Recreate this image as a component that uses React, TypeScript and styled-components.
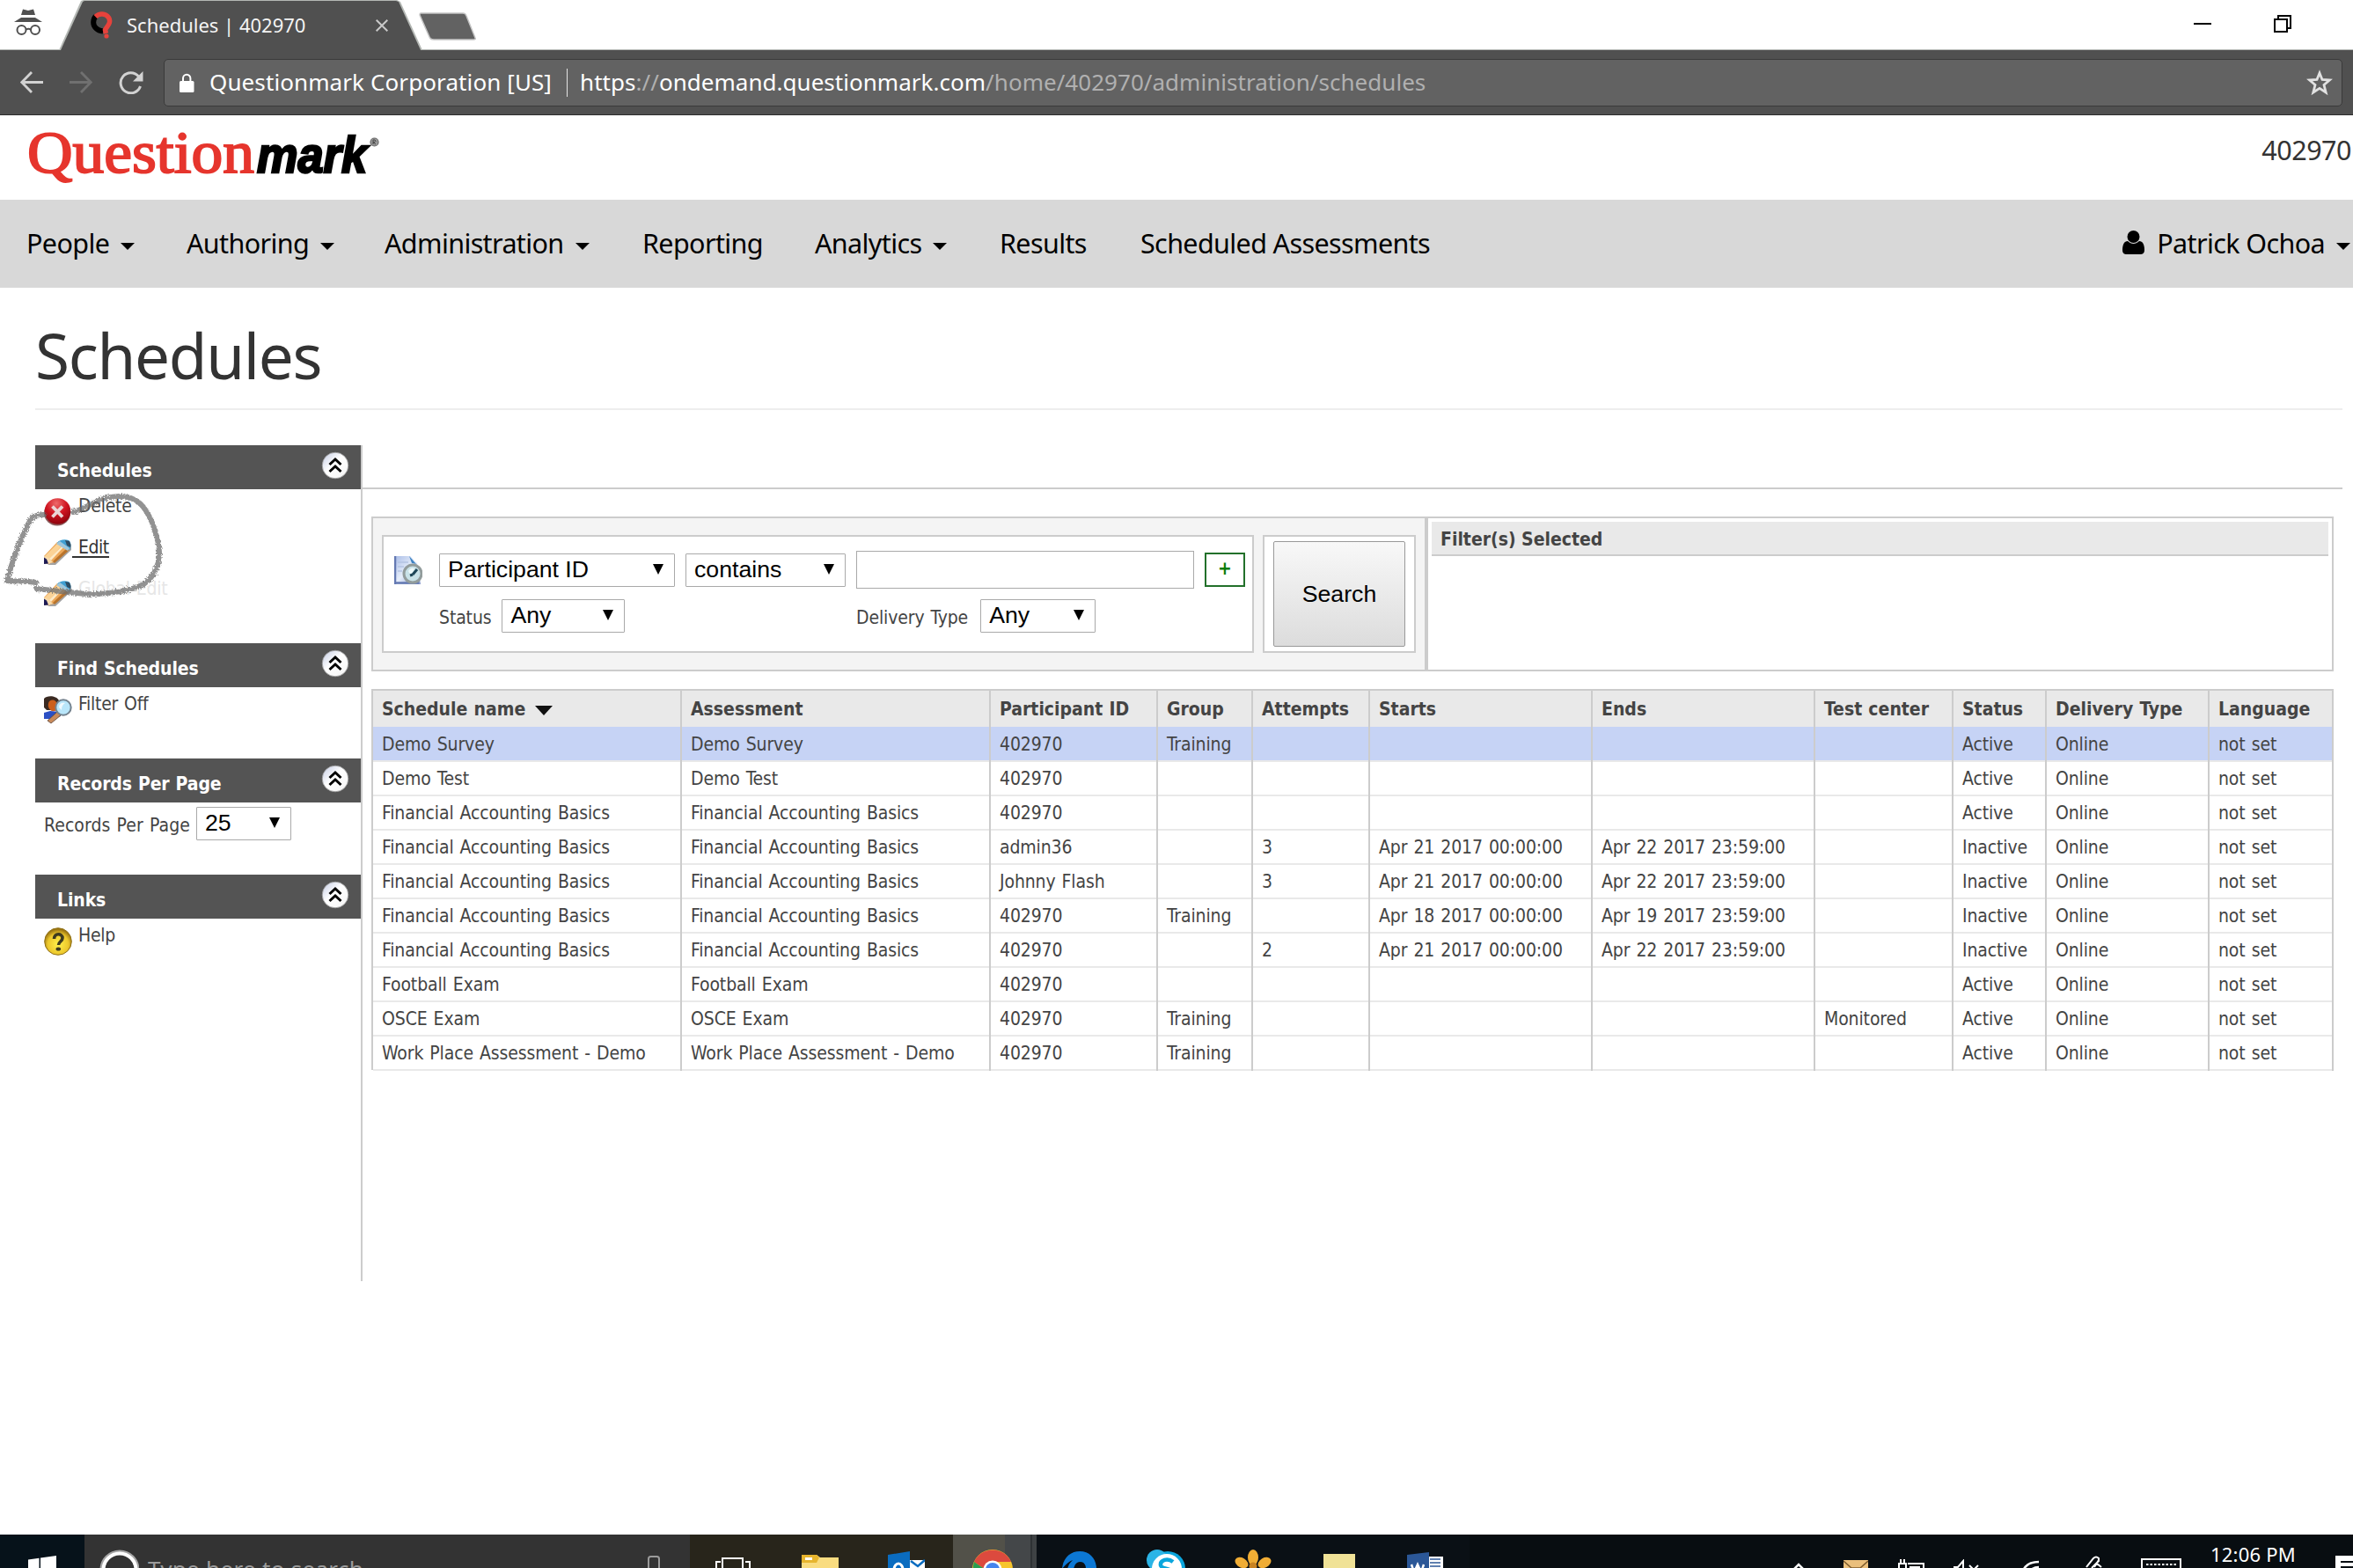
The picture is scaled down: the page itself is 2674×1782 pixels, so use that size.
import React from 'react';
import styled, { createGlobalStyle, css } from 'styled-components';

const ui = '"Noto Sans", "Open Sans", sans-serif';
const tahoma = '"DejaVu Sans Condensed", "DejaVu Sans", sans-serif';
const arial = '"Liberation Sans", Arial, sans-serif';

const Global = createGlobalStyle`
  * { box-sizing: border-box; }
  body { margin: 0; background: #fff; font-family: ${ui}; overflow: hidden; }
  svg { display: block; flex: none; }
`;

const Screen = styled.div`
  width: 2674px;
  height: 1782px;
  display: flex;
  flex-direction: column;
  overflow: hidden;
  background: #fff;
`;

/* ---------- browser chrome ---------- */
const TabStrip = styled.div`
  height: 57px;
  flex: none;
  display: flex;
  background: #fff;
  border-bottom: 1px solid #b4b8b4;
`;
const IncognitoSlot = styled.div`
  width: 67px;
  padding: 9px 0 0 16px;
`;
const Tab = styled.div`
  width: 413px;
  height: 57px;
  flex: none;
  display: flex;
  align-items: center;
  background: #b4b8b4;
  clip-path: polygon(0 100%, 25px 1px, 28px 0, 384px 0, 388px 2px, 100% 100%);
`;
const TabFace = styled.div`
  width: 100%;
  height: 57px;
  display: flex;
  align-items: center;
  padding: 0 39px 0 36px;
  background: #505050;
  clip-path: polygon(2px 100%, 27px 2px, 29px 1px, 383px 1px, 386px 2px, 411px 100%);
`;
const TabTitle = styled.span`
  font-size: 22px;
  line-height: 57px;
  color: #f4f4f4;
  margin-left: 15px;
  flex: 1;
`;
const NewTab = styled.svg`
  margin: 14px 0 0 -5px;
`;
const WindowControls = styled.div`
  margin-left: auto;
  display: flex;
  align-items: flex-start;
  gap: 71px;
  padding: 17px 70px 0 0;
`;
const Toolbar = styled.div`
  height: 74px;
  flex: none;
  display: flex;
  align-items: center;
  background: #505050;
  border-bottom: 1px solid #2c2c2c;
  padding: 0 12px 0 23px;
`;
const NavButtons = styled.div`
  width: 163px;
  display: flex;
  gap: 30px;
`;
const Omnibox = styled.div`
  flex: 1;
  height: 54px;
  display: flex;
  align-items: center;
  background: #626262;
  border: 1px solid #3a3a3a;
  border-radius: 5px;
  padding: 0 10px 0 17px;
  font-size: 26px;
  line-height: 50px;
  color: #fff;
  white-space: pre;
`;
const Site = styled.span`
  margin-left: 17px;
  padding-bottom: 2px;
  letter-spacing: 0.1px;
`;
const Divider = styled.span`
  width: 1px;
  height: 32px;
  background: #e4e4e4;
  margin: 0 14px 0 17px;
`;
const Muted = styled.span`
  color: #b0b0b0;
`;
const Url = styled.span`
  flex: 1;
  padding-bottom: 2px;
  letter-spacing: 0.03px;
`;

/* ---------- site header ---------- */
const Brand = styled.header`
  height: 96px;
  flex: none;
  display: flex;
  justify-content: space-between;
  padding: 0 2px 0 30px;
`;
const Account = styled.span`
  font-size: 30.5px;
  line-height: 78px;
  letter-spacing: -0.5px;
  color: #333;
`;
const Nav = styled.nav`
  height: 100px;
  flex: none;
  display: flex;
  align-items: center;
  background: #d8d8d8;
  padding: 0 3px 2px 30px;
  font-size: 30.5px;
  letter-spacing: -0.62px;
  color: #000;
`;
const NavItem = styled.a<{ $w: number }>`
  width: ${p => p.$w}px;
  flex: none;
  display: flex;
  align-items: center;
  gap: 13px;
  white-space: nowrap;
`;
const Caret = styled.i`
  margin-top: 8px;
  border: 8px solid transparent;
  border-top-color: #000;
  border-bottom: 0;
`;
const User = styled.a`
  margin-left: auto;
  display: flex;
  align-items: center;
  gap: 13px;
  svg { margin-right: 1px; }
`;

/* ---------- page ---------- */
const Page = styled.main`
  flex: 1;
  padding: 26px 12px 0 40px;
`;
const Title = styled.h1`
  margin: 0 0 40px;
  height: 113px;
  border-bottom: 2px solid #eee;
  font-size: 71px;
  font-weight: 400;
  line-height: 101px;
  letter-spacing: -1.3px;
  color: #333;
`;
const Columns = styled.div`
  display: flex;
  font-family: ${tahoma};
  font-size: 21px;
  letter-spacing: -0.12px;
  word-spacing: 1.2px;
  color: #444;
`;
const Sidebar = styled.aside`
  position: relative;
  width: 372px;
  height: 950px;
  flex: none;
  border-right: 2px solid #ccc;
`;
const Section = styled.section<{ $h: number }>`
  height: ${p => p.$h}px;
`;
const SectionHead = styled.header`
  height: 50px;
  display: flex;
  justify-content: space-between;
  background: #545454;
  color: #fff;
  font-weight: 700;
  letter-spacing: -0.1px;
  word-spacing: 0.5px;
  line-height: 58px;
  padding: 0 13px 0 25px;
  svg { margin-top: 7px; }
`;
const Links = styled.div`
  padding: 10px 0 0 10px;
`;
const SideLink = styled.a<{ $active?: boolean; $faded?: boolean }>`
  height: 47px;
  display: flex;
  line-height: 19px;
  letter-spacing: -0.25px;
  color: ${p => (p.$faded ? '#e6e6e6' : '#444')};
  span {
    white-space: pre;
    height: 21px;
    margin-left: ${p => (p.$active ? 0 : 7)}px;
    padding-left: ${p => (p.$active ? 7 : 0)}px;
    ${p => p.$active && css`color: #333; border-bottom: 2px solid #333; letter-spacing: -0.5px;`}
  }
`;
const PerPage = styled.label`
  display: flex;
  align-items: center;
  gap: 7px;
  padding: 5px 0 0 10px;
  letter-spacing: 0.05px;
`;
const Label = styled.span`
  padding-top: 4px;
`;
const SelectBox = styled.span<{ $w: number }>`
  width: ${p => p.$w}px;
  height: 38px;
  display: flex;
  justify-content: space-between;
  align-items: center;
  flex: none;
  border: 1px solid #a9a9a9;
  border-radius: 1px;
  background: #fff;
  color: #000;
  font-family: ${arial};
  font-size: 26.67px;
  letter-spacing: 0;
  word-spacing: 0;
  line-height: 34px;
  padding: 0 12px 2px 9px;
  &::after {
    content: '';
    border: 6px solid transparent;
    border-top: 12px solid #000;
    border-bottom: 0;
  }
`;
const Scribble = styled.svg`
  position: absolute;
  left: -39px;
  top: 36px;
  pointer-events: none;
`;

const Content = styled.div`
  flex: 1;
  padding-left: 10px;
`;
const Rule = styled.div`
  height: 50px;
  margin-left: -10px;
  border-bottom: 2px solid #ccc;
`;
const FilterBar = styled.div`
  width: 2230px;
  height: 176px;
  margin: 31px 0 20px;
  display: flex;
  border: 2px solid #ccc;
  background: #f4f4f4;
`;
const Criteria = styled.div`
  width: 991px;
  height: 134px;
  margin: 19px 10px 0 10px;
  flex: none;
  border: 2px solid #ccc;
  background: #fff;
  padding: 16px 0 0 12px;
`;
const CriteriaRow = styled.div<{ $second?: boolean }>`
  display: flex;
  align-items: center;
  ${p => (p.$second ? 'margin-top: 12px; padding-left: 51px;' : 'height: 43px;')}
`;
const Gap = styled.span<{ $w: number }>`
  width: ${p => p.$w}px;
  flex: none;
`;
const Labelled = styled.label<{ $w: number; $gap: number }>`
  width: ${p => p.$w}px;
  display: flex;
  align-items: center;
  gap: ${p => p.$gap}px;
  white-space: nowrap;
`;
const TextInput = styled.input`
  width: 384px;
  height: 43px;
  border: 1px solid #a9a9a9;
  background: #fff;
  padding: 0;
`;
const AddButton = styled.button`
  width: 46px;
  height: 39px;
  border: 2px solid #22702a;
  background: #fff;
  padding: 0 0 2px;
  color: #087d08;
  font: 700 21px/31px ${tahoma};
`;
const SearchFrame = styled.div`
  width: 174px;
  height: 134px;
  margin-top: 19px;
  flex: none;
  border: 2px solid #ccc;
  background: #fff;
  padding: 5px 10px;
`;
const SearchButton = styled.button`
  width: 150px;
  height: 120px;
  border: 1px solid #999;
  border-radius: 2px;
  background: linear-gradient(#f8f8f8, #dcdcdc);
  font: 26.67px ${arial};
  color: #000;
  padding: 0;
`;
const Selected = styled.div`
  flex: 1;
  margin-left: 10px;
  border-left: 4px solid #ccc;
  background: #fff;
  padding: 4px;
`;
const SelectedHead = styled.div`
  height: 39px;
  background: #e9e9e9;
  border-bottom: 2px solid #ccc;
  font-weight: 700;
  letter-spacing: 0;
  word-spacing: 0;
  line-height: 40px;
  padding-left: 10px;
`;

const Table = styled.div`
  width: 2230px;
  border-left: 2px solid #ccc;
  border-top: 2px solid #ccc;
`;
const Row = styled.div<{ $head?: boolean; $on?: boolean }>`
  display: grid;
  grid-template-columns: 351px 351px 190px 108px 133px 253px 253px 157px 106px 185px 141px;
  height: ${p => (p.$head ? 41 : 39)}px;
  line-height: ${p => (p.$head ? 41 : 39)}px;
  background: ${p => (p.$head ? '#e9e9e9' : p.$on ? '#c6d3f5' : '#fff')};
  ${p => p.$head && 'font-weight: 700; letter-spacing: 0; word-spacing: 0.6px;'}
`;
const Cell = styled.div<{ $head?: boolean; $sorted?: boolean }>`
  padding: ${p => (p.$sorted ? 0 : 1)}px 0 0 10px;
  border-right: 2px solid #ccc;
  white-space: nowrap;
  display: flex;
  align-items: center;
  gap: 11px;
  ${p => !p.$head && 'box-shadow: inset 0 -2px 0 #e9e9e9;'}
`;
const Sort = styled.i`
  margin-top: 2px;
  border: 10px solid transparent;
  border-top: 11px solid #111;
  border-bottom: 0;
`;

/* ---------- taskbar ---------- */
const Taskbar = styled.footer`
  height: 38px;
  flex: none;
  display: flex;
  background: #080d11;
  overflow: hidden;
`;
const StartButton = styled.div`
  width: 96px;
  flex: none;
  background: #06121a;
  padding: 24px 0 0 32px;
`;
const SearchBox = styled.div`
  width: 688px;
  flex: none;
  display: flex;
  align-items: flex-start;
  background: #333;
  color: #9b9b9b;
  font-size: 26px;
  line-height: 36px;
  white-space: nowrap;
`;
const Placeholder = styled.span`
  flex: 1;
  padding: 21px 0 0 10px;
  letter-spacing: 0.3px;
`;
const Apps = styled.div`
  display: flex;
  background: linear-gradient(90deg, #28251b 299px, #525149 299px 358px, #444749 358px 387px, #2e3234 387px 389px, #3e4244 389px 394px, #0a1015 394px);
`;
const AppSlot = styled.div<{ $top: number; $w?: number }>`
  width: ${p => p.$w ?? 98.4}px;
  height: 38px;
  flex: none;
  display: flex;
  justify-content: center;
  padding-top: ${p => p.$top}px;
`;
const Tray = styled.div`
  display: flex;
  margin-left: auto;
  color: #fff;
`;
const Clock = styled.span`
  width: 166px;
  flex: none;
  font-size: 22px;
  line-height: 44px;
  letter-spacing: 0.2px;
  padding-left: 24px;
`;

/* ---------- drawings ---------- */
const Chevron = () => (
  <svg width="32" height="32" viewBox="0 0 32 32">
    <defs>
      <linearGradient id="ball" x1="0" y1="0" x2="1" y2="1">
        <stop offset="0" stopColor="#c3cbe4" />
        <stop offset=".45" stopColor="#fff" />
        <stop offset="1" stopColor="#f4f4f4" />
      </linearGradient>
    </defs>
    <circle cx="16" cy="16" r="14.800" fill="url(#ball)" stroke="#9a9a9a" strokeWidth=".8" />
    <path d="M9.500 15l6.500-6 6.500 6M9.500 23l6.500-6 6.500 6" fill="none" stroke="#000" strokeWidth="3" />
  </svg>
);
const DeleteIcon = () => (
  <svg width="32" height="32" viewBox="0 0 32 32">
    <defs>
      <radialGradient id="red" cx=".45" cy=".2" r=".9">
        <stop offset="0" stopColor="#ee6a6a" />
        <stop offset=".45" stopColor="#cf1420" />
        <stop offset="1" stopColor="#7d0008" />
      </radialGradient>
    </defs>
    <ellipse cx="15" cy="17" rx="15" ry="14.500" fill="#5a1515" opacity=".7" />
    <circle cx="15.500" cy="15" r="14.800" fill="url(#red)" />
    <path d="M9.500 9.500l11.500 12M21 9.500l-11.500 12" stroke="#ead6d6" strokeWidth="3.800" />
  </svg>
);
const PencilIcon = () => (
  <svg width="32" height="32" viewBox="0 0 32 32">
    <path d="M4 29l9 0L31 12V4l-3 9z" fill="#666" opacity=".6" />
    <path d="M0 19L15 3l14 8L12 26l-8 2-4-1z" fill="#eda859" />
    <path d="M0 20L16 4l5 2L6 23z" fill="#fbd396" />
    <path d="M6 22L21 7l2 1L8 24z" fill="#fdebc8" />
    <path d="M10 25L26 10l3 2-17 15z" fill="#b9742c" />
    <path d="M15 4c2-4 9-4.500 13-3 3 2 3 8 1 11z" fill="#3f9fd2" />
    <path d="M14 5l4-3 11 8-2 3z" fill="#9fc6da" />
    <path d="M24 1l5 1q2 4 1 7l-4-2z" fill="#2f4c62" />
    <path d="M0 19l5 2 5 5-7 2-3-1z" fill="#f7dcae" />
    <path d="M0 20.500l3 2 2 5-5 .5z" fill="#1d1b55" />
  </svg>
);
const FindIcon = () => (
  <svg width="32" height="32" viewBox="0 0 32 32">
    <path d="M0 3C3-1 14-1 17 5l-3 11H3L0 13z" fill="#3a2a22" />
    <path d="M6 6c4-3 9-1 9 5s-3 7-6 6-6-6-3-11z" fill="#cc5f1c" />
    <path d="M0 19l7-2 10 1 2 5-11 3H0z" fill="#2b4fc4" />
    <path d="M15 18L4 28l4 3 11-9z" fill="#c98a5a" stroke="#5a4438" strokeWidth=".8" />
    <circle cx="22" cy="13" r="8.700" fill="#b9e6fa" stroke="#74828e" strokeWidth="2" />
    <path d="M17 13c0-4 3-6 7-5-3 2-4 4-4 8z" fill="#fff" opacity=".8" />
  </svg>
);
const HelpIcon = () => (
  <svg width="32" height="32" viewBox="0 0 32 32">
    <defs>
      <radialGradient id="gold" cx=".5" cy=".6" r=".55">
        <stop offset="0" stopColor="#fff04a" />
        <stop offset=".7" stopColor="#ecc72c" />
        <stop offset="1" stopColor="#9c7612" />
      </radialGradient>
    </defs>
    <circle cx="16" cy="16" r="15.300" fill="url(#gold)" stroke="#8f7015" />
    <path d="M11.500 13c0-7 9.500-6.500 9.500-1 0 4-4.500 4-4.500 8" fill="none" stroke="#3d3a20" strokeWidth="3.600" />
    <ellipse cx="16.300" cy="24.500" rx="2.800" ry="2" fill="#3d3a20" />
  </svg>
);
const ScheduleIcon = () => (
  <svg width="32" height="32" viewBox="0 0 32 32">
    <defs>
      <linearGradient id="doc" x1="0" y1="0" x2="1" y2="1">
        <stop offset="0" stopColor="#a9bce6" />
        <stop offset=".5" stopColor="#e6eefb" />
        <stop offset="1" stopColor="#7f93c8" />
      </linearGradient>
    </defs>
    <path d="M0 0h18l8 8 4 24H0z" fill="url(#doc)" />
    <path d="M0 30.500h28M1 0v32" stroke="#6479b2" strokeWidth="2.500" />
    <path d="M17 0l8 9-5-1z" fill="#3f83c2" />
    <path d="M4 7h12M4 12h7M4 17h5" stroke="#b4c4e2" strokeWidth="1.500" />
    <circle cx="21" cy="20" r="10" fill="#c9e2e8" stroke="#929c9c" strokeWidth="3" />
    <path d="M16 17q3-5 7-3l-4 8z" fill="#eef9fa" />
    <path d="M21 21l5-6M21 21l-3 1" stroke="#1e4658" strokeWidth="3" />
  </svg>
);
const Logo = () => (
  <svg width="405" height="96" viewBox="0 0 405 96">
    <text x="1" y="65" fontFamily='"Liberation Serif", serif' fontSize="67" fill="#e6352d" stroke="#e6352d" strokeWidth="1.900" textLength="258" lengthAdjust="spacingAndGlyphs">Question</text>
    <text x="262" y="65" fontFamily='"Liberation Sans", sans-serif' fontSize="58" fontWeight="700" fontStyle="italic" fill="#000" stroke="#000" strokeWidth="2.600" textLength="125" lengthAdjust="spacingAndGlyphs">mark</text>
    <circle cx="395.500" cy="30.500" r="4.500" fill="#999" stroke="#666" strokeWidth="1.200" />
    <path d="M394 33v-5h2q2 1.300 0 2.600h-2l3 2.400" fill="none" stroke="#444" strokeWidth="1" />
  </svg>
);

const headers = ['Schedule name', 'Assessment', 'Participant ID', 'Group', 'Attempts', 'Starts', 'Ends', 'Test center', 'Status', 'Delivery Type', 'Language'];
const A = 'Apr 21 2017 00:00:00';
const B = 'Apr 22 2017 23:59:00';
const FAB = 'Financial Accounting Basics';
const WPA = 'Work Place Assessment - Demo';
const rows = [
  ['Demo Survey', 'Demo Survey', '402970', 'Training', '', '', '', '', 'Active'],
  ['Demo Test', 'Demo Test', '402970', '', '', '', '', '', 'Active'],
  [FAB, FAB, '402970', '', '', '', '', '', 'Active'],
  [FAB, FAB, 'admin36', '', '3', A, B, '', 'Inactive'],
  [FAB, FAB, 'Johnny Flash', '', '3', A, B, '', 'Inactive'],
  [FAB, FAB, '402970', 'Training', '', 'Apr 18 2017 00:00:00', 'Apr 19 2017 23:59:00', '', 'Inactive'],
  [FAB, FAB, '402970', '', '2', A, B, '', 'Inactive'],
  ['Football Exam', 'Football Exam', '402970', '', '', '', '', '', 'Active'],
  ['OSCE Exam', 'OSCE Exam', '402970', 'Training', '', '', '', 'Monitored', 'Active'],
  [WPA, WPA, '402970', 'Training', '', '', '', '', 'Active'],
];

const navItems: [string, number, boolean][] = [
  ['People', 182, true],
  ['Authoring', 225, true],
  ['Administration', 293, true],
  ['Reporting', 196, false],
  ['Analytics', 210, true],
  ['Results', 160, false],
  ['Scheduled Assessments', 340, false],
];

const BrowserChrome = () => (
  <>
    <TabStrip>
      <IncognitoSlot>
        <svg width="33" height="32" viewBox="0 0 33 32" fill="#505050">
          <path d="M10 1.500l6 1.500 6-1.500L24 8H8z" />
          <path d="M8 11h16l8 5H0z" />
          <g fill="none" stroke="#505050" strokeWidth="2">
            <circle cx="8.500" cy="25" r="5" />
            <circle cx="24" cy="25" r="5" />
            <path d="M13.500 24.500q2.700-1.500 5.500 0" />
          </g>
        </svg>
      </IncognitoSlot>
      <Tab>
        <TabFace>
          <svg width="26" height="32" viewBox="0 0 26 32" fill="none" strokeWidth="6">
            <path d="M14 22.500C7 22 3 17 3.200 12 3.400 9 4 7 6 5.500" stroke="#000" />
            <path d="M5.500 6C10 1.500 17 2 20.500 7c3.500 6-2 10-4 14l1 4" stroke="#e6423c" strokeWidth="5.500" />
            <circle cx="18" cy="28" r="2.600" fill="#e6423c" />
          </svg>
          <TabTitle>Schedules | 402970</TabTitle>
          <svg width="14" height="14" viewBox="0 0 14 14">
            <path d="M.7.700l12.600 12.600M13.300.700L.7 13.300" stroke="#c9c9c9" strokeWidth="2" />
          </svg>
        </TabFace>
      </Tab>
      <NewTab width="67" height="34" viewBox="0 0 67 34">
        <path d="M3 1h48q3 0 4 3l10 25q1 2-2 2H18q-4 0-5-3L2 3q0-2 1-2z" fill="#626262" stroke="#c4c4c4" strokeWidth="1.500" />
      </NewTab>
      <WindowControls>
        <svg width="20" height="20" viewBox="0 0 20 20"><path d="M0 10h20" stroke="#000" strokeWidth="2" /></svg>
        <svg width="20" height="20" viewBox="0 0 20 20" fill="none" stroke="#000" strokeWidth="2">
          <path d="M1 5h14v14H1zM5 5V1h14v14h-4" />
        </svg>
      </WindowControls>
    </TabStrip>
    <Toolbar>
      <NavButtons>
        <svg width="26" height="26" viewBox="0 0 26 26" fill="none" stroke="#d2d2d2" strokeWidth="2.800"><path d="M26 12.500H2M13 1L1.800 12.500 13 24" /></svg>
        <svg width="26" height="26" viewBox="0 0 26 26" fill="none" stroke="#707070" strokeWidth="2.800"><path d="M0 12.500h24M13 1l11.200 11.500L13 24" /></svg>
        <svg width="28" height="26" viewBox="0 0 28 26"><path d="M22.500 6A11.500 11.500 0 1 0 24.500 17" fill="none" stroke="#d2d2d2" strokeWidth="3" /><path d="M27.500 0v11.500H16z" fill="#d2d2d2" /></svg>
      </NavButtons>
      <Omnibox>
        <svg width="17" height="24" viewBox="0 0 17 24">
          <rect y="10" width="16.500" height="13" rx="1.500" fill="#fff" />
          <path d="M4 11V7a4.200 4.200 0 0 1 8.400 0v4" fill="none" stroke="#fff" strokeWidth="2" />
        </svg>
        <Site>Questionmark Corporation [US]</Site>
        <Divider />
        <Url>https<Muted>://</Muted>ondemand.questionmark.com<Muted>/home/402970/administration/schedules</Muted></Url>
        <svg width="30" height="30" viewBox="0 0 30 30">
          <path d="M15 4l3 7.500 8.500.5-6.500 5.500 2.200 8.500L15 21.300 7.800 26 10 17.500 3.500 12l8.500-.5z" fill="none" stroke="#e2e2e2" strokeWidth="2.800" />
        </svg>
      </Omnibox>
    </Toolbar>
  </>
);

const Head = ({ children }: { children: string }) => (
  <SectionHead>{children}<Chevron /></SectionHead>
);

const SideMenu = () => (
  <Sidebar>
    <Section $h={225}>
      <Head>Schedules</Head>
      <Links>
        <SideLink><DeleteIcon /><span>Delete</span></SideLink>
        <SideLink $active><PencilIcon /><span>Edit</span></SideLink>
        <SideLink $faded><PencilIcon /><span>Global Edit</span></SideLink>
      </Links>
    </Section>
    <Section $h={131}>
      <Head>Find Schedules</Head>
      <Links><SideLink><FindIcon /><span>Filter Off</span></SideLink></Links>
    </Section>
    <Section $h={132}>
      <Head>Records Per Page</Head>
      <PerPage><Label>Records Per Page</Label><SelectBox $w={108}>25</SelectBox></PerPage>
    </Section>
    <Section $h={110}>
      <Head>Links</Head>
      <Links><SideLink><HelpIcon /><span>Help</span></SideLink></Links>
    </Section>
    <Scribble width="200" height="150" viewBox="0 0 200 150" fill="none" stroke="#6e6e6e" strokeLinecap="round">
      <defs>
        <filter id="chalk" x="-10%" y="-10%" width="120%" height="120%">
          <feTurbulence type="fractalNoise" baseFrequency=".6" numOctaves="2" result="n" />
          <feDisplacementMap in="SourceGraphic" in2="n" scale="5" />
        </filter>
      </defs>
      <g filter="url(#chalk)" strokeWidth="6" opacity=".75">
        <path d="M82 40C98 36 112 22 134 22c22 0 30 12 38 30 4 12 8 22 8 34 0 16-8 32-22 38-14 6-42 10-62 9-20-2-38-4-56-6" />
        <path d="M49 43c-8 0-14 2-16 7C22 70 14 92 7 118c8 1 20 0 33 2" />
      </g>
    </Scribble>
  </Sidebar>
);

const Filters = () => (
  <FilterBar>
    <Criteria>
      <CriteriaRow>
        <ScheduleIcon />
        <Gap $w={19} />
        <SelectBox $w={268}>Participant ID</SelectBox>
        <Gap $w={12} />
        <SelectBox $w={182}>contains</SelectBox>
        <Gap $w={12} />
        <TextInput />
        <Gap $w={12} />
        <AddButton>+</AddButton>
      </CriteriaRow>
      <CriteriaRow $second>
        <Labelled $w={474} $gap={12}><Label>Status</Label><SelectBox $w={140}>Any</SelectBox></Labelled>
        <Labelled $w={274} $gap={14}><Label>Delivery Type</Label><SelectBox $w={131}>Any</SelectBox></Labelled>
      </CriteriaRow>
    </Criteria>
    <SearchFrame><SearchButton>Search</SearchButton></SearchFrame>
    <Selected><SelectedHead>Filter(s) Selected</SelectedHead></Selected>
  </FilterBar>
);

const WindowsTaskbar = () => (
  <Taskbar>
    <StartButton>
      <svg width="32" height="32" viewBox="0 0 32 32" fill="#fff"><path d="M0 4.500L12.500 2.700V16H0zM14 2.500L32 0v16H14z" /></svg>
    </StartButton>
    <SearchBox>
      <svg width="62" height="38" viewBox="0 0 62 38" fill="none">
        <circle cx="40" cy="40" r="21" stroke="#a5a5a5" strokeWidth="3" />
        <circle cx="40" cy="40" r="18.500" stroke="#fff" strokeWidth="4" />
      </svg>
      <Placeholder>Type here to search</Placeholder>
      <svg width="50" height="38" viewBox="0 0 50 38"><rect x="3" y="25" width="12" height="26" rx="2.500" fill="none" stroke="#9b9b9b" strokeWidth="2" /></svg>
    </SearchBox>
    <Apps>
      <AppSlot $top={26}>
        <svg width="40" height="20" viewBox="0 0 40 20" fill="none" stroke="#fff" strokeWidth="2"><path d="M8 20V1h23v19M1 20V5h5M39 20V5h-5" /></svg>
      </AppSlot>
      <AppSlot $top={22}>
        <svg width="42" height="20" viewBox="0 0 42 20"><path d="M0 1h17l4 3h21v16H0z" fill="#f9dc80" /><path d="M0 1h17l3 3-3 6H0z" fill="#e7b52e" /><rect x="4" y="4" width="8" height="3" fill="#fff" /></svg>
      </AppSlot>
      <AppSlot $top={19}>
        <svg width="42" height="22" viewBox="0 0 42 22"><path d="M0 4L25 0v22H0z" fill="#0a6cc0" /><path d="M25 10h17v12H25z" fill="#fff" /><path d="M26 11l8 6 8-7" fill="none" stroke="#0a6cc0" strokeWidth="2.500" /><ellipse cx="12" cy="21" rx="5" ry="7" fill="none" stroke="#fff" strokeWidth="3" /></svg>
      </AppSlot>
      <AppSlot $top={17}>
        <svg width="48" height="22" viewBox="0 0 48 22">
          <circle cx="24" cy="23" r="23" fill="#f7c52c" />
          <path d="M3 14A23 23 0 0 1 45 14H24l-8 9z" fill="#dc4a3e" />
          <path d="M3 14A23 23 0 0 0 2 23h14z" fill="#2a9d52" />
          <circle cx="24" cy="23" r="10.500" fill="#fff" />
          <circle cx="24" cy="23" r="8" fill="#4585ee" />
        </svg>
      </AppSlot>
      <AppSlot $top={19}>
        <svg width="40" height="20" viewBox="0 0 40 20"><path d="M0 20C1 7 10 0 20 0c12 0 19 9 19 20H27c0-5-2-8-7-8-4 0-6 4-7 8H6c1-4 3-7 6-10-5 2-9 6-12 10z" fill="#0c78d4" /></svg>
      </AppSlot>
      <AppSlot $top={17}>
        <svg width="44" height="22" viewBox="0 0 44 22"><circle cx="24" cy="22" r="20" fill="#0ba6dd" /><circle cx="12" cy="12" r="12" fill="#2bb4e6" /><circle cx="23" cy="22" r="17" fill="#fff" /><path d="M30 14c-6-5-15-2-14 4 1 4 10 3 13 7" fill="none" stroke="#0ba6dd" strokeWidth="4.500" /></svg>
      </AppSlot>
      <AppSlot $top={17}>
        <svg width="44" height="22" viewBox="0 0 44 22" fill="#f0ad35"><ellipse cx="22" cy="9" rx="6" ry="9" /><ellipse cx="9" cy="15" rx="8" ry="5.500" transform="rotate(30 9 15)" /><ellipse cx="35" cy="15" rx="8" ry="5.500" transform="rotate(-30 35 15)" /><circle cx="22" cy="19" r="4.500" fill="#c98322" /></svg>
      </AppSlot>
      <AppSlot $top={22}>
        <svg width="36" height="20" viewBox="0 0 36 20"><path d="M0 0h36v20H0z" fill="#f0e297" /></svg>
      </AppSlot>
      <AppSlot $top={20}>
        <svg width="42" height="22" viewBox="0 0 42 22"><path d="M24 5h17v17H24z" fill="#fff" /><path d="M26 8h12M26 12h12M26 16h12" stroke="#2b5797" strokeWidth="1.600" /><path d="M0 3l25-3v22H0z" fill="#2b5797" /><path d="M5 14l3 9 4-9 4 9 3-9" fill="none" stroke="#fff" strokeWidth="2.500" /></svg>
      </AppSlot>
    </Apps>
    <Tray>
      <AppSlot $w={40} $top={32}><svg width="16" height="10" viewBox="0 0 16 10"><path d="M1 9l7-7 7 7" fill="none" stroke="#fff" strokeWidth="2.500" /></svg></AppSlot>
      <AppSlot $w={90} $top={29}><svg width="28" height="12" viewBox="0 0 28 12"><path d="M0 0h28v12H0z" fill="#eabf7c" /><path d="M0 1l9 8h10l9-8" fill="none" stroke="#7d5b2c" strokeWidth="1.500" /></svg></AppSlot>
      <AppSlot $w={36} $top={28}><svg width="30" height="12" viewBox="0 0 30 12" fill="none" stroke="#fff" strokeWidth="2"><path d="M11 5h18v8M1 12V5h8v7M3 5V0M7 5V0M13 9h11v3" /></svg></AppSlot>
      <AppSlot $w={90} $top={28}><svg width="30" height="12" viewBox="0 0 30 12" fill="none" stroke="#fff" strokeWidth="2"><path d="M1 12V9h4l6-7v10M18 7l5 5 5-5" /></svg></AppSlot>
      <AppSlot $w={56} $top={29}><svg width="20" height="12" viewBox="0 0 20 12" fill="none" stroke="#fff" strokeWidth="2.500"><path d="M1 12C4 5 10 2 19 2M9 12c2-2 5-4 10-4" /></svg></AppSlot>
      <AppSlot $w={88} $top={24}><svg width="20" height="14" viewBox="0 0 20 14" fill="none" stroke="#fff" strokeWidth="2"><path d="M1 13L9 3q3-3 6 0v3L7 14M10 13l5-8M13 9l5 4" /></svg></AppSlot>
      <AppSlot $w={64} $top={27}><svg width="46" height="14" viewBox="0 0 46 14" fill="none" stroke="#fff" strokeWidth="2"><path d="M1 14V1h44v13" /><path d="M6 7h35" strokeDasharray="2.500 2" /></svg></AppSlot>
      <Clock>12:06 PM</Clock>
      <AppSlot $w={20} $top={24}><svg width="20" height="14" viewBox="0 0 20 14" fill="#fff"><path d="M0 0h20v6H6v2h14v4H6v2H0z" /></svg></AppSlot>
    </Tray>
  </Taskbar>
);

export default function App() {
  return (
    <Screen>
      <Global />
      <BrowserChrome />
      <Brand><Logo /><Account>402970</Account></Brand>
      <Nav>
        {navItems.map(([name, w, menu]) => (
          <NavItem key={name} $w={w}>{name}{menu && <Caret />}</NavItem>
        ))}
        <User>
          <svg width="25" height="28" viewBox="0 0 25 28"><circle cx="12.500" cy="7" r="7" /><path d="M6 12c4 4 9 4 13 0 4 0 6 4 6 10 0 4-2 5-5 5H5c-3 0-5-1-5-5 0-6 2-10 6-10z" /></svg>
          Patrick Ochoa<Caret />
        </User>
      </Nav>
      <Page>
        <Title>Schedules</Title>
        <Columns>
          <SideMenu />
          <Content>
            <Rule />
            <Filters />
            <Table>
              <Row $head>
                {headers.map((h, i) => <Cell $head $sorted={i === 0} key={h}>{h}{i === 0 && <Sort />}</Cell>)}
              </Row>
              {rows.map((r, n) => (
                <Row key={n} $on={n === 0}>
                  {[...r, 'Online', 'not set'].map((v, i) => <Cell key={i}>{v}</Cell>)}
                </Row>
              ))}
            </Table>
          </Content>
        </Columns>
      </Page>
      <WindowsTaskbar />
    </Screen>
  );
}
